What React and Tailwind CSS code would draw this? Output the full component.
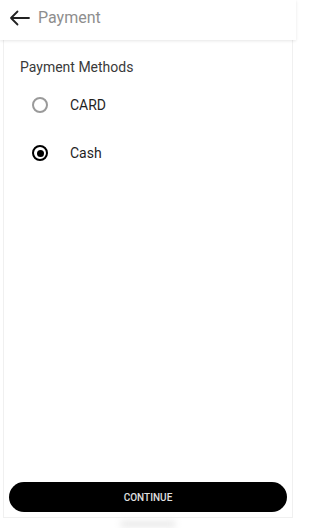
import React, { useState } from "react";

const methods = ["CARD", "Cash"];

const Radio = ({ checked }) => (
  <span
    className={`flex h-[16px] w-[16px] items-center justify-center rounded-full border-2 ${
      checked ? "border-black" : "border-[#9a9a9a]"
    }`}
  >
    {checked && <span className="h-[7px] w-[7px] rounded-full bg-black" />}
  </span>
);

const App = () => {
  const [selected, setSelected] = useState("Cash");
  return (
    <div className="flex h-[528px] w-[296px] flex-col bg-white font-['Roboto',sans-serif]">
      <div className="relative z-10 flex h-[40px] shrink-0 items-center bg-white pb-[4px] pl-[9px] shadow-[0_1px_3px_rgba(0,0,0,0.1)]">
        <svg width="21" height="16" viewBox="0 0 21 16" fill="none">
          <path
            d="M20 8H2M8.5 1.5L2 8l6.5 6.5"
            stroke="#222"
            strokeWidth="1.8"
            strokeLinecap="round"
            strokeLinejoin="round"
          />
        </svg>
        <span className="ml-[8px] text-[16px] text-[#8e8e8e]">Payment</span>
      </div>

      <div className="mx-[3px] flex flex-1 flex-col border-x border-b border-[#f0f0f0] px-[5px] pb-[5px] pt-[17px]">
        <p className="pl-[11px] text-[14px] leading-[20px] text-[#3a3a3a]">
          Payment Methods
        </p>
        <div className="mt-[4px] flex flex-col">
          {methods.map((m) => (
            <button
              key={m}
              onClick={() => setSelected(m)}
              className="flex h-[48px] items-center pl-[23px] text-left"
            >
              <Radio checked={selected === m} />
              <span className="ml-[22px] text-[14px] text-[#1f1f1f]">{m}</span>
            </button>
          ))}
        </div>
        <div className="flex-1" />
        <button className="h-[30px] w-full rounded-full bg-black text-[10px] font-medium text-[#e0e0e0]">
          CONTINUE
        </button>
      </div>

      <div className="flex h-[10px] shrink-0 justify-center pt-[3px]">
        <div className="h-[6px] w-[56px] rounded-full bg-[#e8e8e8] blur-[3px]" />
      </div>
    </div>
  );
};

export default App;
